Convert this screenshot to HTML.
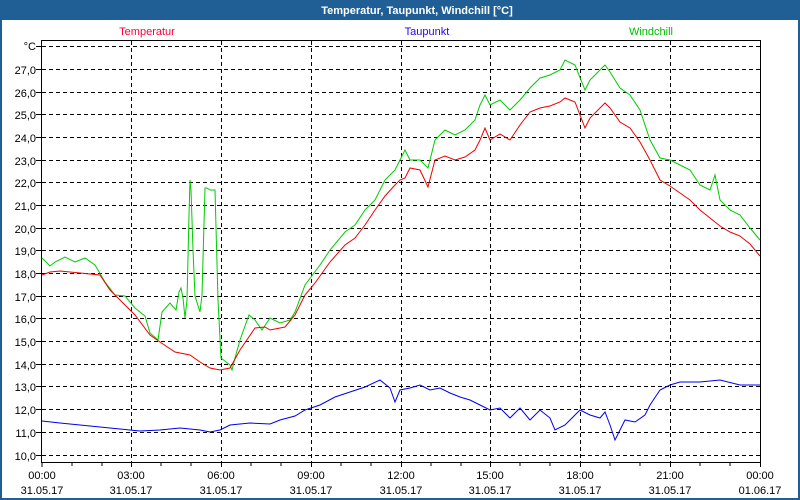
<!DOCTYPE html><html><head><style>body{margin:0;width:800px;height:500px;overflow:hidden;background:#fff}svg{display:block}text{font-family:"Liberation Sans",sans-serif;font-size:11px}</style></head><body>
<svg width="800" height="500" viewBox="0 0 800 500">
<rect x="0" y="0" width="800" height="500" fill="#1f5f96"/>
<rect x="2" y="20" width="796" height="478" fill="#fff"/>
<text x="417" y="14" fill="#fff" font-weight="bold" text-anchor="middle" font-size="12">Temperatur, Taupunkt, Windchill [°C]</text>
<text x="147" y="35" fill="#ff0033" text-anchor="middle">Temperatur</text>
<text x="427" y="35" fill="#2200ff" text-anchor="middle">Taupunkt</text>
<text x="651" y="35" fill="#00bb00" text-anchor="middle">Windchill</text>
<g stroke="#000" stroke-dasharray="4,3" stroke-width="1" shape-rendering="crispEdges">
<path d="M42 46.5H760M42 69.5H760M42 92.5H760M42 114.5H760M42 137.5H760M42 160.5H760M42 182.5H760M42 205.5H760M42 228.5H760M42 250.5H760M42 273.5H760M42 296.5H760M42 318.5H760M42 341.5H760M42 364.5H760M42 386.5H760M42 409.5H760M42 432.5H760M42 455.5H760"/>
<path d="M131.5 41V462M221.5 41V462M311.5 41V462M401.5 41V462M490.5 41V462M580.5 41V462M670.5 41V462"/>
</g>
<rect x="41.5" y="40.5" width="719" height="422" fill="none" stroke="#000" shape-rendering="crispEdges"/>
<g stroke="#000" shape-rendering="crispEdges"><path d="M42 462v5M72 462v4M102 462v4M131.5 462v5M161 462v4M191 462v4M221.5 462v5M251 462v4M281 462v4M311.5 462v5M341 462v4M371 462v4M401.5 462v5M431 462v4M461 462v4M490.5 462v5M520 462v4M550 462v4M580.5 462v5M610 462v4M640 462v4M670.5 462v5M700 462v4M730 462v4M760.5 462v5"/>
<path d="M36 46.5h6M36 69.5h6M36 92.5h6M36 114.5h6M36 137.5h6M36 160.5h6M36 182.5h6M36 205.5h6M36 228.5h6M36 250.5h6M36 273.5h6M36 296.5h6M36 318.5h6M36 341.5h6M36 364.5h6M36 386.5h6M36 409.5h6M36 432.5h6M36 455.5h6"/></g>
<g text-anchor="end" fill="#000">
<text x="36" y="50">°C</text><text x="36" y="74">27,0</text><text x="36" y="97">26,0</text><text x="36" y="119">25,0</text><text x="36" y="142">24,0</text><text x="36" y="165">23,0</text><text x="36" y="187">22,0</text><text x="36" y="210">21,0</text><text x="36" y="233">20,0</text><text x="36" y="255">19,0</text><text x="36" y="278">18,0</text><text x="36" y="301">17,0</text><text x="36" y="323">16,0</text><text x="36" y="346">15,0</text><text x="36" y="369">14,0</text><text x="36" y="391">13,0</text><text x="36" y="414">12,0</text><text x="36" y="437">11,0</text><text x="36" y="460">10,0</text>
</g>
<g text-anchor="middle" fill="#000">
<text x="42" y="479">00:00</text><text x="42" y="494">31.05.17</text>
<text x="131" y="479">03:00</text><text x="131" y="494">31.05.17</text>
<text x="221" y="479">06:00</text><text x="221" y="494">31.05.17</text>
<text x="311" y="479">09:00</text><text x="311" y="494">31.05.17</text>
<text x="401" y="479">12:00</text><text x="401" y="494">31.05.17</text>
<text x="490" y="479">15:00</text><text x="490" y="494">31.05.17</text>
<text x="580" y="479">18:00</text><text x="580" y="494">31.05.17</text>
<text x="670" y="479">21:00</text><text x="670" y="494">31.05.17</text>
<text x="760" y="479">00:00</text><text x="760" y="494">01.06.17</text>
</g>
<polyline fill="none" stroke="#0000ee" points="42,421 60,423 80,425 100,427 120,429 140,431 160,430 180,428 200,430 210,432 220,430 230,425 250,423 270,424 280,420 295,416 305,410 320,405 335,397 350,392 365,387 380,380 390,388 395,402 400,390 410,388 420,385 430,390 440,388 450,393 460,397 470,400 480,405 490,410 500,408 510,418 520,408 530,420 540,410 550,418 555,430 565,425 570,420 580,410 590,415 600,418 605,412 610,425 615,440 620,430 625,420 635,422 645,415 650,405 660,390 670,385 680,382 700,382 720,380 740,385 760,385"/>
<polyline fill="none" stroke="#00cc00" points="42,258 50,266 55,262 65,257 75,262 85,258 95,265 105,282 115,295 125,296 135,308 145,316 150,333 158,340 162,312 170,303 176,310 179,292 181,288 183,298 185,318 187,300 189,215 190,180 191,190 193,250 195,296 200,312 202,295 205,188 207,188 210,190 215,190 218,300 221,358 230,365 232,370 235,358 240,340 249,315 255,320 262,330 270,318 280,323 290,320 295,312 305,285 320,265 330,250 345,232 355,225 365,210 375,200 385,180 395,170 400,160 405,150 410,160 420,160 428,168 435,140 445,130 455,135 465,130 475,120 480,105 485,95 490,105 500,100 510,110 520,100 530,88 540,78 550,75 560,70 565,60 575,65 585,90 590,80 600,70 605,65 610,72 620,88 630,95 640,110 650,140 660,158 670,160 680,165 690,170 700,185 710,190 715,175 720,200 730,210 740,215 750,228 760,240"/>
<polyline fill="none" stroke="#ee0000" points="42,275 50,272 60,271 80,273 100,275 110,290 120,300 135,315 150,335 160,342 175,352 190,355 200,362 210,368 220,370 230,368 240,350 255,328 265,327 270,330 285,327 295,315 305,295 315,283 330,262 345,245 355,238 365,225 375,210 385,196 395,185 400,180 405,178 410,168 420,170 428,187 435,160 445,156 455,160 465,157 475,150 480,140 485,128 490,140 500,134 510,140 520,125 530,112 540,108 550,106 560,102 565,98 575,102 585,128 590,118 600,108 605,103 610,108 620,122 630,128 640,142 650,160 660,180 670,186 680,193 690,200 700,210 710,218 720,226 730,232 740,236 750,244 760,256"/>
</svg></body></html>
